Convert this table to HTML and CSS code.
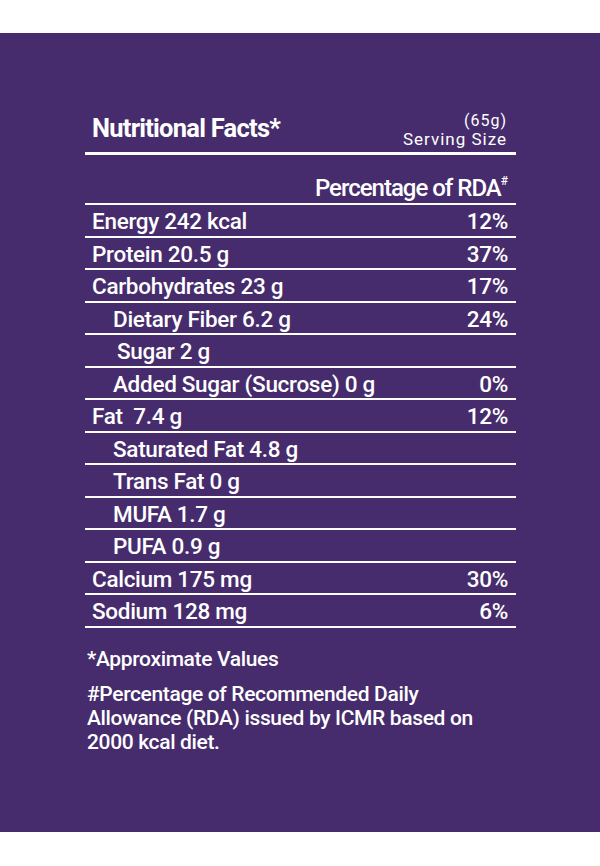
FILE: index.html
```html
<!DOCTYPE html>
<html>
<head>
<meta charset="utf-8">
<link rel="stylesheet" href="styles.css">
</head>
<body>
<div class="panel">
  <div class="head">
    <div class="title">Nutritional Facts*</div>
    <div class="serving"><div class="grams">(65g)</div><div class="size">Serving Size</div></div>
  </div>
  <div class="rda">Percentage of RDA<sup>#</sup></div>
  <div class="table">
    <div class="row"><span>Energy 242 kcal</span><span>12%</span></div>
    <div class="row"><span>Protein 20.5 g</span><span>37%</span></div>
    <div class="row"><span>Carbohydrates 23 g</span><span>17%</span></div>
    <div class="row sub"><span>Dietary Fiber 6.2 g</span><span>24%</span></div>
    <div class="row sub sugar"><span>Sugar 2 g</span><span></span></div>
    <div class="row sub"><span>Added Sugar (Sucrose) 0 g</span><span>0%</span></div>
    <div class="row"><span>Fat&nbsp; 7.4 g</span><span>12%</span></div>
    <div class="row sub"><span>Saturated Fat 4.8 g</span><span></span></div>
    <div class="row sub"><span>Trans Fat 0 g</span><span></span></div>
    <div class="row sub"><span>MUFA 1.7 g</span><span></span></div>
    <div class="row sub"><span>PUFA 0.9 g</span><span></span></div>
    <div class="row"><span>Calcium 175 mg</span><span>30%</span></div>
    <div class="row"><span>Sodium 128 mg</span><span>6%</span></div>
  </div>
  <div class="notes">
    <p class="approx">*Approximate Values</p>
    <p class="hash">#Percentage of Recommended Daily<br>Allowance (RDA) issued by ICMR based on<br>2000 kcal diet.</p>
  </div>
</div>
</body>
</html>
```

FILE: styles.css
```css
html, body {
  margin: 0;
  padding: 0;
  background: #fff;
}
.panel {
  margin-top: 33px;
  height: 799px;
  background: #462c6c;
  padding: 0 84px 0 85px;
  box-sizing: border-box;
  color: #fff;
  font-family: Roboto, "Liberation Sans", sans-serif;
  padding-top: 74px;
}
.head {
  display: flex;
  justify-content: space-between;
  align-items: flex-end;
  padding: 0 9px 0 7px;
  height: 45px;
  border-bottom: 3px solid #fff;
}
.title {
  font-weight: 700;
  font-size: 25.5px;
  letter-spacing: -0.75px;
  line-height: 1;
  margin-bottom: 11px;
}
.serving {
  text-align: right;
  letter-spacing: 1px;
  margin-bottom: 4px;
}
.grams {
  font-size: 16px;
  line-height: 18px;
}
.size {
  font-size: 17px;
  line-height: 18px;
}
.rda {
  text-align: right;
  padding-right: 8px;
  font-size: 24px;
  font-weight: 500;
  letter-spacing: -1px;
  height: 50px;
  line-height: 66px;
  box-sizing: border-box;
  border-bottom: 2px solid #fff;
}
.rda sup {
  font-size: 12px;
  vertical-align: top;
  line-height: 52px;
  letter-spacing: 0;
}
.row {
  display: flex;
  justify-content: space-between;
  align-items: center;
  height: 32.5px;
  box-sizing: border-box;
  border-bottom: 2px solid #fff;
  padding: 0 8px 0 7px;
  font-size: 22.5px;
  font-weight: 500;
  letter-spacing: -0.3px;
}
.row span {
  line-height: 1;
  padding-top: 2px;
}
.row.sub {
  padding-left: 28px;
}
.row.sugar {
  padding-left: 32px;
}
.notes {
  padding-left: 2px;
  font-size: 21px;
  font-weight: 500;
  letter-spacing: -0.35px;
}
.notes p {
  margin: 0;
}
.approx {
  margin-top: 19px !important;
  line-height: 24px;
}
.hash {
  margin-top: 11px !important;
  line-height: 24px;
}
```
